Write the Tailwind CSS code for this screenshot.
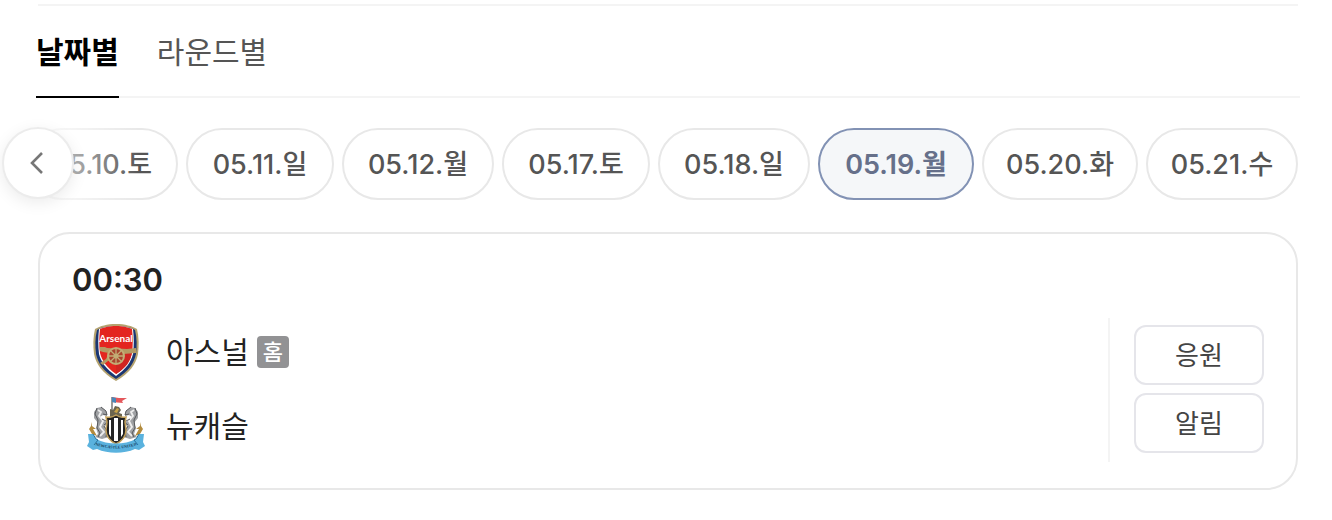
<!DOCTYPE html>
<html lang="ko">
<head>
    <meta charset="UTF-8">
    <meta name="viewport" content="width=device-width, initial-scale=1.0">
    <title>경기 일정</title>
    <script src="https://cdn.jsdelivr.net/npm/@tailwindcss/browser@4"></script>
</head>
<body class="bg-white font-['Inter','Noto_Sans_CJK_KR',sans-serif] text-[#222]">
    <div class="pt-1">
        <!-- 탭 -->
        <nav class="ml-9 mr-8">
            <div class="ml-[2px] mr-[2px] h-[2px] bg-[#f4f4f4]"></div>
            <div class="flex gap-[38px] border-b-2 border-[#f4f4f4] text-[30px] leading-9">
                <a href="#date" class="-mb-[2px] border-b-2 border-black pt-7 pb-[26px] font-bold text-black">날짜별</a>
                <a href="#round" class="pt-7 pb-[26px] text-[#555]">라운드별</a>
            </div>
        </nav>

        <!-- 날짜 선택 -->
        <div class="relative mt-[30px]">
            <div class="flex justify-end gap-2 overflow-hidden pr-[34px] text-[27px] font-medium leading-9 text-[#555]">
                <button class="w-38 shrink-0 rounded-full border-2 border-[#e8e8e8] pt-[17px] pb-[15px]">05.10.토</button>
                <button class="w-37 shrink-0 rounded-full border-2 border-[#e8e8e8] pt-[17px] pb-[15px]">05.11.일</button>
                <button class="w-38 shrink-0 rounded-full border-2 border-[#e8e8e8] pt-[17px] pb-[15px]">05.12.월</button>
                <button class="w-37 shrink-0 rounded-full border-2 border-[#e8e8e8] pt-[17px] pb-[15px]">05.17.토</button>
                <button class="w-38 shrink-0 rounded-full border-2 border-[#e8e8e8] pt-[17px] pb-[15px]">05.18.일</button>
                <button class="w-39 shrink-0 rounded-full border-2 border-[#8292b4] bg-[#f5f7f9] pt-[17px] pb-[15px] font-semibold text-[#66708a]">05.19.월</button>
                <button class="w-39 shrink-0 rounded-full border-2 border-[#e8e8e8] pt-[17px] pb-[15px]">05.20.화</button>
                <button class="w-38 shrink-0 rounded-full border-2 border-[#e8e8e8] pt-[17px] pb-[15px]">05.21.수</button>
            </div>
            <div class="pointer-events-none absolute inset-y-0 left-0 w-[140px] bg-linear-to-r from-white from-10% to-white/0"></div>
            <button aria-label="이전 날짜" class="absolute -top-px left-[2px] flex size-[72px] items-center justify-center rounded-full border-2 border-[#ececec] bg-white shadow-[0_4px_16px_rgba(0,0,0,0.08)]">
                <svg class="h-6 w-4" viewBox="0 0 16 24" fill="none" stroke="#777" stroke-width="2.6">
                    <path d="M12 2 2 12l10 10"/>
                </svg>
            </button>
        </div>

        <!-- 경기 카드 -->
        <section class="ml-[38px] mr-[34px] mt-8 rounded-[32px] border-2 border-[#e8e8e8] px-8 pt-7 pb-[26px]">
            <h2 class="text-[31px] font-semibold leading-9">00:30</h2>
            <div class="mt-5 flex justify-between">
                <ul class="pl-[14px] text-[30px] leading-9">
                    <li class="flex items-center pt-1">
                        <svg class="size-[60px]" viewBox="0 0 60 60">
                            <path d="M30 2c9 0 16 2 21 5 2 8 2 17 1 25-2 10-8 19-22 27C16 51 10 42 8 32 7 24 7 15 9 7c5-3 12-5 21-5Z" fill="#b5a36f"/>
                            <path d="M30 4c8 0 14 1 19 4 2 8 2 16 1 24-2 9-7 17-20 25-13-8-18-16-20-25-1-8-1-16 1-24 5-3 11-4 19-4Z" fill="#1b3672"/>
                            <path d="M30 4c7 0 12 1 17 3 1 9 1 17 0 25-2 8-7 15-17 22-10-7-15-14-17-22-1-8-1-16 0-25 5-2 10-3 17-3Z" fill="#fff"/>
                            <path d="M30 4c7 0 11 1 16 3 1 9 1 17 0 24-2 8-7 15-16 21-9-6-14-13-16-21-1-7-1-15 0-24 5-2 9-3 16-3Z" fill="#e3251f"/>
                            <path d="M30 30h16c-1 9-6 16-16 22Z" fill="#cf2422"/>
                            <text x="30" y="20" text-anchor="middle" font-family="Lato" font-size="10" font-weight="700" fill="#fff">Arsenal</text>
                            <path d="M14 25h5l2 1 20 1 9-1v5l-13 1-5 3-10 4-5 4-3-2 6-4 3-6-6-1-3-1Z" fill="#b49a63"/>
                            <circle cx="30" cy="34" r="8" fill="#a8442f" stroke="#c2ac75" stroke-width="2"/>
                            <path d="M30 26v16M22 34h16M24.500 28.500l11 11M35.500 28.500l-11 11" stroke="#c2ac75" stroke-width="1.300"/>
                            <circle cx="30" cy="34" r="2.500" fill="#c2ac75"/>
                        </svg>
                        <span class="ml-5">아스널</span>
                        <span class="ml-2 flex size-8 items-center justify-center rounded bg-[#929294] text-[22px] font-medium leading-8 text-white">홈</span>
                    </li>
                    <li class="mt-[14px] flex items-center">
                        <svg class="size-[60px]" viewBox="0 2 60 60">
                            <!-- 깃발과 성 -->
                            <path d="M26 3v16" stroke="#777" stroke-width="1.500"/>
                            <path d="M26 3l7 1 8 0-5 3 1 2-11-1Z" fill="#e4575b"/>
                            <path d="M26 3l4 1v5l-4-1Z" fill="#4b87b8"/>
                            <path d="M24 19v-4l3 1 2-4 4 1 2 3-2 3 3 1v3H24Z" fill="#6b644e"/>
                            <path d="M28 18l3-4 2 1-2 4Z" fill="#c9a348"/>
                            <!-- 해마 -->
                            <g id="horse">
                                <path d="M11 14l4-1 5 4 1 5-4-1-3 2 4 4 4 1v3l-4 1 4 4 1 7-7 2-7-2 3-3-2-6 2-5-4-5v-6Z" fill="#a0a2a5"/>
                                <path d="M12 16l3 2-2 4 4 5-3 6 4 5-4 4" stroke="#eee" stroke-width="1.800" fill="none"/>
                                <path d="M11 14l-2 6 3 6-1 8 3 5-2 4M15 13l5 4 1 4-4-1M16 25l6 3-4 3M18 32l3 5-1 6" stroke="#55575a" fill="none"/>
                                <path d="M5 28l1 4 4 3-3 0 4 7-5-2-3-5 2-3Z" fill="#b28b3e"/>
                            </g>
                            <use href="#horse" transform="translate(60 0) scale(-1 1)"/>
                            <!-- 방패 -->
                            <path d="M20 23c4 1 7 0 10-2 3 2 6 3 10 2l-1 5 1 8c0 7-4 11-10 14-6-3-10-7-10-14l1-8Z" fill="#242424" stroke="#c3a15a" stroke-width="1.500"/>
                            <path d="M23 26h2v17l-2-3ZM28 24h4v23h-4ZM35 26h2v14l-2 3Z" fill="#fff"/>
                            <!-- 리본 -->
                            <path d="M2 40l5 0 3 5c12 6 28 6 40 0l3-5 5 0-1 8 2 4-6 4-4-1c-11 5-27 5-38 0l-4 1-6-4 2-4Z" fill="#5ab2de"/>
                            <path d="M7 40l3 5 2 1-4 5M53 40l-3 5-2 1 4 5" stroke="#28719b" fill="none"/>
                            <path id="ribbon" d="M3 49Q30 60 57 49" fill="none"/>
                            <text font-family="Liberation Serif" font-size="4" font-weight="700" fill="#173c59" text-anchor="middle"><textPath href="#ribbon" startOffset="50%">NEWCASTLE UNITED</textPath></text>
                        </svg>
                        <span class="ml-5">뉴캐슬</span>
                    </li>
                </ul>
                <div class="flex flex-col gap-2 border-l-2 border-[#f4f4f4] pt-[7px] pb-[9px] pl-6 text-[26px] leading-9 text-[#444]">
                    <button class="w-[130px] rounded-xl border-2 border-[#e5e5ea] pt-[11px] pb-[9px]">응원</button>
                    <button class="w-[130px] rounded-xl border-2 border-[#e5e5ea] pt-[11px] pb-[9px]">알림</button>
                </div>
            </div>
        </section>
    </div>
</body>
</html>
